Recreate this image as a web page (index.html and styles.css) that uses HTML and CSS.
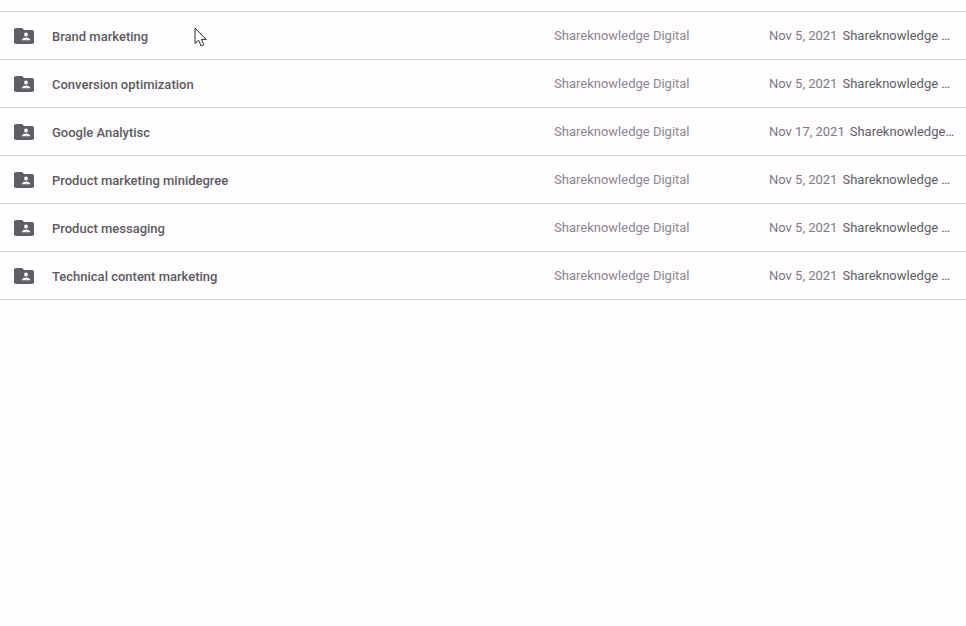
FILE: index.html
```html
<!DOCTYPE html>
<html lang="en">
<head>
<meta charset="utf-8">
<title>Shared folders</title>
<link rel="stylesheet" href="styles.css">
</head>
<body>
<svg class="defs" width="0" height="0" aria-hidden="true">
  <symbol id="folder" viewBox="0 0 20 16">
    <path fill="#5f5d65" d="M2 0h6l2 2h8a2 2 0 0 1 2 2v10a2 2 0 0 1-2 2H2a2 2 0 0 1-2-2V2a2 2 0 0 1 2-2z"/>
    <circle fill="#fffcff" cx="12" cy="6.600" r="2"/>
    <path fill="#fffcff" d="M8 12.200v-.7c0-1.300 2.700-2 4-2s4 .7 4 2v.7z"/>
  </symbol>
</svg>
<main class="list">
  <div class="row">
    <svg class="icon"><use href="#folder"/></svg>
    <span class="name">Brand marketing</span>
    <span class="location">Shareknowledge Digital</span>
    <span class="meta"><span class="date">Nov 5, 2021</span><span class="owner">Shareknowledge Digital</span></span>
  </div>
  <div class="row">
    <svg class="icon"><use href="#folder"/></svg>
    <span class="name">Conversion optimization</span>
    <span class="location">Shareknowledge Digital</span>
    <span class="meta"><span class="date">Nov 5, 2021</span><span class="owner">Shareknowledge Digital</span></span>
  </div>
  <div class="row">
    <svg class="icon"><use href="#folder"/></svg>
    <span class="name">Google Analytisc</span>
    <span class="location">Shareknowledge Digital</span>
    <span class="meta"><span class="date">Nov 17, 2021</span><span class="owner owner-wide">Shareknowledge Digital</span></span>
  </div>
  <div class="row">
    <svg class="icon"><use href="#folder"/></svg>
    <span class="name">Product marketing minidegree</span>
    <span class="location">Shareknowledge Digital</span>
    <span class="meta"><span class="date">Nov 5, 2021</span><span class="owner">Shareknowledge Digital</span></span>
  </div>
  <div class="row">
    <svg class="icon"><use href="#folder"/></svg>
    <span class="name">Product messaging</span>
    <span class="location">Shareknowledge Digital</span>
    <span class="meta"><span class="date">Nov 5, 2021</span><span class="owner">Shareknowledge Digital</span></span>
  </div>
  <div class="row">
    <svg class="icon"><use href="#folder"/></svg>
    <span class="name">Technical content marketing</span>
    <span class="location">Shareknowledge Digital</span>
    <span class="meta"><span class="date">Nov 5, 2021</span><span class="owner">Shareknowledge Digital</span></span>
  </div>
</main>
<svg class="cursor" width="14" height="21" viewBox="0 0 14 21" aria-hidden="true">
  <path fill="#fff" stroke="#2b2b2b" stroke-width="1" stroke-linejoin="round" d="M1 1v15.500l3.700-3.200 2.400 5.700 2.700-1.200-2.400-5.400h4.800z"/>
</svg>
</body>
</html>
```
FILE: styles.css
```css
html, body {
  margin: 0;
  height: 100%;
  overflow: hidden;
  background: #fffcff;
}

body {
  position: relative;
  font-family: Roboto, "Liberation Sans", sans-serif;
  font-size: 13px;
  color: #5f6368;
}

.defs {
  position: absolute;
}

.list {
  padding-top: 11px;
}

.row {
  display: flex;
  align-items: center;
  height: 47px;
  padding-left: 14px;
  border-top: 1px solid #d8d6da;
}

.row:last-child {
  border-bottom: 1px solid #d8d6da;
}

.icon {
  flex: none;
  width: 20px;
  height: 16px;
  margin-right: 18px;
}

.name {
  flex: none;
  width: 502px;
  font-weight: 500;
  color: #5c5a61;
  padding-top: 1px;
}

.location {
  flex: none;
  width: 215px;
  color: #8a8790;
  margin-top: -1px;
}

.meta {
  display: flex;
  gap: 5px;
  margin-top: -1px;
}

.date {
  flex: none;
  color: #7d7a82;
}

.owner {
  width: 108px;
  white-space: nowrap;
  overflow: hidden;
  text-overflow: ellipsis;
  color: #605e66;
}

.owner-wide {
  width: 106px;
}

.cursor {
  position: absolute;
  left: 194px;
  top: 27px;
}
```
